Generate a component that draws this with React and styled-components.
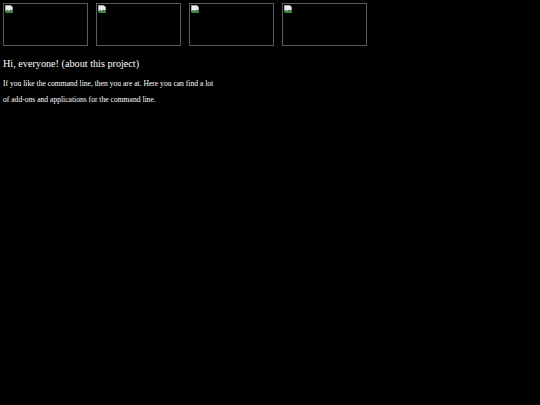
import React from 'react';
import styled, { createGlobalStyle } from 'styled-components';

const GlobalStyle = createGlobalStyle`
  html, body {
    margin: 0;
    padding: 0;
    background: #000;
    color: #fff;
    font-family: "Liberation Serif", "Times New Roman", serif;
  }
`;

const Page = styled.div`
  padding: 3px;
`;

const Gallery = styled.div`
  display: flex;
  gap: 8px;
`;

const Frame = styled.div`
  width: 83px;
  height: 41px;
  border: 1px solid #5a5a5a;
  position: relative;
`;

const BrokenIcon = styled.svg`
  position: absolute;
  top: 1px;
  left: 1px;
`;

const Title = styled.h1`
  font-size: 10.2px;
  font-weight: normal;
  margin: 10px 0 0;
  line-height: 16px;
`;

const Text = styled.p`
  font-size: 7.6px;
  line-height: 16px;
  width: 214px;
  margin: 4px 0 0;
`;

const Broken = () => (
  <BrokenIcon width="8" height="8" viewBox="0 0 16 16">
    <path d="M0.5 0.5h11l4 4v5l-3 2-2-2-3 3-3-2-4 2z" fill="#e8ecf2" stroke="#8a94a0" strokeWidth="1" />
    <path d="M1 13l4-2 3 2 3-3 2 2 3-1v5H1z" fill="#3f8a36" />
  </BrokenIcon>
);

const App = () => (
  <>
    <GlobalStyle />
    <Page>
      <Gallery>
        {[0, 1, 2, 3].map(i => (
          <Frame key={i}>
            <Broken />
          </Frame>
        ))}
      </Gallery>
      <Title>Hi, everyone! (about this project)</Title>
      <Text>
        If you like the command line, then you are at. Here you can find a lot
        of add-ons and applications for the command line.
      </Text>
    </Page>
  </>
);

export default App;
